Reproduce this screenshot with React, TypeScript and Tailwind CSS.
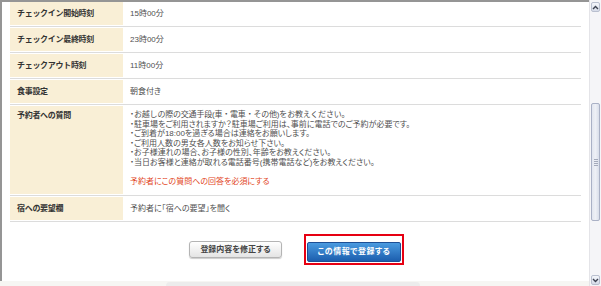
import React from "react";

const simpleRows = [
  { label: "チェックイン開始時刻", value: "15時00分" },
  { label: "チェックイン最終時刻", value: "23時00分" },
  { label: "チェックアウト時刻", value: "11時00分" },
  { label: "食事設定", value: "朝食付き" },
];

const questions = [
  "・駐車場をご利用されますか？駐車場ご利用は、事前に電話でのご予約が必要です。",
  "・ご到着が18:00を過ぎる場合は連絡をお願いします。",
  "・ご利用人数の男女各人数をお知らせ下さい。",
  "・お子様連れの場合、お子様の性別、年齢をお教えください。",
  "・当日お客様と連絡が取れる電話番号(携帯電話など)をお教えください。",
];

function Row({ label, tall, children }: { label: string; tall?: boolean; children: React.ReactNode }) {
  return (
    <div className="flex border-b border-[#dcdcdc] pb-px mb-px">
      <div
        className={`w-[113px] shrink-0 bg-[#f9efd6] pl-[7px] text-[8px] font-bold text-[#333] tracking-[-0.3px] [font-feature-settings:normal] ${
          tall ? "h-[88px] pt-[4px]" : "h-[23px] flex items-center"
        }`}
      >
        {label}
      </div>
      <div
        className={`flex-1 pl-[7px] text-[8px] text-[#505050] ${
          tall ? "h-[88px] pt-[4px]" : "h-[23px] flex items-center"
        }`}
      >
        {children}
      </div>
    </div>
  );
}

function Chevron({ up }: { up?: boolean }) {
  return (
    <svg width="7" height="5" viewBox="0 0 7 5">
      <path
        d={up ? "M1 4 L3.5 1.5 L6 4" : "M1 1 L3.5 3.5 L6 1"}
        fill="none"
        stroke="#3c4150"
        strokeWidth="1.4"
      />
    </svg>
  );
}

function Scrollbar() {
  return (
    <div className="w-[12px] h-full flex flex-col bg-[#f5f5f8] border-l border-[#e4e4e8] pt-[2px] pb-px">
      <div className="h-[10px] mx-px rounded-[2px] border border-[#b9bfcf] bg-gradient-to-b from-[#f4f6fb] to-[#d6dbe8] flex items-center justify-center">
        <Chevron up />
      </div>
      <div className="h-[91px]" />
      <div className="h-[118px] mx-px rounded-[2px] border border-[#aab1c6] bg-gradient-to-r from-[#e2e6f0] via-[#eef0f6] to-[#d9deea] flex flex-col items-center justify-center gap-px">
        <div className="w-[4px] h-px bg-[#a4aabb]" />
        <div className="w-[4px] h-px bg-[#a4aabb]" />
        <div className="w-[4px] h-px bg-[#a4aabb]" />
        <div className="w-[4px] h-px bg-[#a4aabb]" />
      </div>
      <div className="flex-1" />
      <div className="h-[10px] mx-px rounded-[2px] border border-[#b9bfcf] bg-gradient-to-b from-[#f4f6fb] to-[#d6dbe8] flex items-center justify-center">
        <Chevron />
      </div>
    </div>
  );
}

export default function App() {
  return (
    <div className="w-[601px] h-[286px] flex bg-white overflow-hidden font-['Liberation_Sans','Noto_Sans_CJK_JP',sans-serif] [font-feature-settings:'palt']">
      <div className="flex-1 flex flex-col">
        <div className="flex-1 border-t-2 border-l-2 border-[#959595] pl-[8px] pr-[8px]">
          {simpleRows.map((r) => (
            <Row key={r.label} label={r.label}>
              {r.value}
            </Row>
          ))}
          <Row label="予約者への質問" tall>
            <div className="leading-[9.5px]">
              <div>
                ・
                <span className="[font-feature-settings:normal] tracking-[-0.2px]">
                  お越しの際の交通手段(車・電車・その他)をお教えください。
                </span>
              </div>
              {questions.map((q) => (
                <div key={q}>{q}</div>
              ))}
              <div className="mt-[9.5px] text-[#e2461d]">予約者にこの質問への回答を必須にする</div>
            </div>
          </Row>
          <Row label="宿への要望欄">予約者に「宿への要望」を聞く</Row>
          <div className="mt-[12px] flex items-center justify-center gap-[22px] pl-[2px]">
            <button className="w-[93px] h-[17px] rounded-[3px] border border-[#b4b4b4] bg-gradient-to-b from-white to-[#e4e4e4] shadow-[0_1px_1px_rgba(0,0,0,0.2)] text-[8px] font-bold text-[#444]">
              登録内容を修正する
            </button>
            <div className="border-2 border-[#e60012] p-px">
              <button className="w-[94px] h-[20px] rounded-[2px] border border-[#1d4f95] bg-gradient-to-b from-[#4a9be0] to-[#1c5eae] text-[8px] font-bold tracking-[0.5px] text-white">
                この情報で登録する
              </button>
            </div>
          </div>
        </div>
        <div className="h-[5px] flex bg-[#f6f6f3]">
          <div className="w-[166px]" />
          <div className="w-[254px] mt-px rounded-tl-[4px] rounded-tr-[4px] bg-[#ececec]" />
        </div>
      </div>
      <Scrollbar />
    </div>
  );
}
